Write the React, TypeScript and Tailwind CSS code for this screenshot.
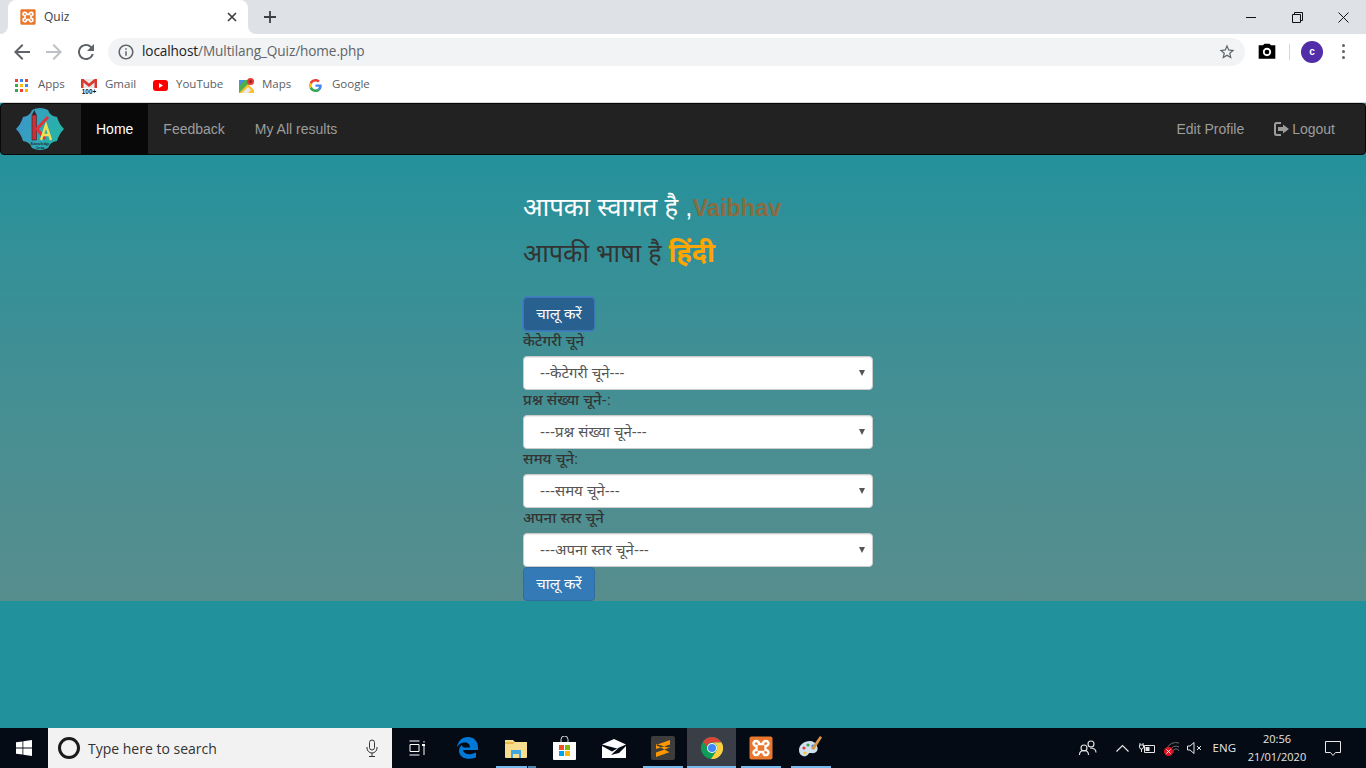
import type { ReactNode } from "react";

const devanagari = "font-['Liberation_Sans','Noto_Sans','Noto_Sans_CJK_SC',sans-serif]";

function Xampp({ size }: { size: number }) {
  return (
    <svg width={size} height={size} viewBox="0 0 24 24">
      <rect x="0.5" y="0.5" width="23" height="23" rx="2" fill="#e9772e" />
      <path
        d="M7 5C9 5 10 6.500 10 8H14C14 6.500 15 5 17 5C18.600 5 19.500 6.400 19.500 7.500C19.500 9 18 10 16.500 10V14C18 14 19.500 15 19.500 16.500C19.500 17.600 18.600 19 17 19C15 19 14 17.500 14 16H10C10 17.500 9 19 7 19C5.400 19 4.500 17.600 4.500 16.500C4.500 15 6 14 7.500 14V10C6 10 4.500 9 4.500 7.500C4.500 6.400 5.400 5 7 5Z"
        fill="none"
        stroke="#fff"
        strokeWidth="2.400"
      />
    </svg>
  );
}

function KnowledgeLogo() {
  return (
    <svg width="50" height="44" viewBox="0 0 50 44">
      <defs>
        <linearGradient id="badge" x1="0" y1="0" x2="1" y2="0.3">
          <stop offset="0" stopColor="#3f93cf" />
          <stop offset="1" stopColor="#27b3a8" />
        </linearGradient>
      </defs>
      <path
        d="M17 3Q25 -1 33 3Q35 9 42 10Q44 17 49 22Q44 27 42 34Q35 35 33 41Q25 45 17 41Q15 35 8 34Q6 27 1 22Q6 17 8 10Q15 9 17 3Z"
        fill="url(#badge)"
      />
      <rect x="17" y="8" width="4.500" height="25" fill="#c9303a" stroke="#3a2020" strokeWidth="0.600" />
      <path d="M17 8l2.250-5 2.250 5z" fill="#3a2020" />
      <path d="M21 23L33 10M22 22l8 10" stroke="#e2323a" strokeWidth="3" fill="none" />
      <path d="M26 33l5-15 5 15M27.500 28h7" stroke="#f4e04d" strokeWidth="2.400" fill="none" />
      <text x="25" y="37.500" textAnchor="middle" fontSize="4" fontWeight="700" fill="#1c2a3a" fontFamily="Liberation Serif, serif">
        Knowledge
      </text>
      <text x="25" y="41.500" textAnchor="middle" fontSize="3.400" fontWeight="700" fill="#1c2a3a" fontFamily="Liberation Serif, serif">
        Arena
      </text>
    </svg>
  );
}

function Bookmark({ icon, label, className }: { icon: ReactNode; label: string; className: string }) {
  return (
    <div className={`flex items-center ${className}`}>
      {icon}
      <span className="relative top-[-2px] text-[11.500px] text-[#5a5e63] font-['Open_Sans',sans-serif]">{label}</span>
    </div>
  );
}

function TaskIcon({ children, active, bar }: { children: ReactNode; active?: boolean; bar?: string }) {
  return (
    <div className={`relative flex h-full w-[49px] items-center justify-center ${active ? "bg-[#3a3e47]" : ""}`}>
      {children}
      {bar && <div className={`absolute bottom-0 h-[2px] bg-[#76b9ed] ${bar}`} />}
    </div>
  );
}

function Field({ label, value }: { label: string; value: string }) {
  return (
    <>
      <label className={`mb-[5px] block h-[20px] text-[15px] leading-[19px] font-medium text-[#333] ${devanagari}`}>{label}</label>
      <div className="relative w-[350px]">
        <select className={`block h-[34px] w-full appearance-none rounded-[4px] border border-[#ccc] bg-white pl-[16px] pr-3 text-[15px] text-[#555] shadow-[inset_0_1px_1px_rgba(0,0,0,0.075)] ${devanagari}`}>
          <option>{value}</option>
        </select>
        <svg className="absolute right-[8px] top-[14px]" width="6" height="6" viewBox="0 0 6 6" fill="#555">
          <path d="M0 0h6L3 6z" />
        </svg>
      </div>
    </>
  );
}

export default function App() {
  return (
    <div className="flex h-[768px] w-[1366px] flex-col overflow-hidden bg-[#21919b]">
      {/* tab strip */}
      <div className="flex h-[34px] shrink-0 items-center bg-[#dee1e6]">
        <div className="relative ml-2 flex h-full w-[240px] items-center rounded-t-[8px] bg-white pl-3 pr-[11px]">
          <svg className="absolute bottom-0 left-[-8px]" width="8" height="8" viewBox="0 0 8 8">
            <path d="M8 0v8H0a8 8 0 0 0 8-8z" fill="#fff" />
          </svg>
          <svg className="absolute bottom-0 right-[-8px]" width="8" height="8" viewBox="0 0 8 8">
            <path d="M0 0v8h8a8 8 0 0 1-8-8z" fill="#fff" />
          </svg>
          <Xampp size={16} />
          <span className="ml-2 flex-1 text-[12px] text-[#3c4043] font-['Open_Sans',sans-serif]">Quiz</span>
          <svg width="10" height="10" viewBox="0 0 10 10">
            <path d="M1 1l8 8M9 1l-8 8" stroke="#3c4043" strokeWidth="1.700" />
          </svg>
        </div>
        <svg className="ml-[15px]" width="14" height="14" viewBox="0 0 14 14">
          <path d="M7 1v12M1 7h12" stroke="#3c4043" strokeWidth="1.800" />
        </svg>
        <div className="ml-auto flex h-full items-center">
          <div className="flex w-[46px] justify-center">
            <div className="h-px w-[10px] bg-[#111]" />
          </div>
          <div className="flex w-[46px] justify-center">
            <svg width="11" height="11" viewBox="0 0 11 11" fill="none" stroke="#111">
              <path d="M.5 2.500h8v8h-8zM2.500 2.500v-2h8v8h-2" />
            </svg>
          </div>
          <div className="flex w-[46px] justify-center">
            <svg width="11" height="11" viewBox="0 0 11 11" stroke="#111">
              <path d="M.5.5l10 10M10.500.5l-10 10" />
            </svg>
          </div>
        </div>
      </div>

      {/* toolbar */}
      <div className="flex h-[35px] shrink-0 items-center bg-white">
        <svg className="ml-[10px]" width="24" height="24" viewBox="0 0 24 24" fill="#5f6368">
          <path d="M20 11H7.830l5.590-5.590L12 4l-8 8 8 8 1.410-1.410L7.830 13H20v-2z" />
        </svg>
        <svg className="ml-[8px]" width="24" height="24" viewBox="0 0 24 24" fill="#bdc1c6">
          <path d="M12 4l-1.410 1.410L16.170 11H4v2h12.170l-5.580 5.590L12 20l8-8z" />
        </svg>
        <svg className="ml-[8px]" width="24" height="24" viewBox="0 0 24 24" fill="#5f6368">
          <path d="M17.650 6.350A7.958 7.958 0 0 0 12 4c-4.420 0-7.990 3.580-7.990 8s3.570 8 7.990 8c3.730 0 6.840-2.550 7.730-6h-2.080A5.990 5.990 0 0 1 12 18c-3.310 0-6-2.690-6-6s2.690-6 6-6c1.660 0 3.140.690 4.220 1.780L13 11h7V4l-2.350 2.350z" />
        </svg>
        <div className="ml-[10px] flex h-[28px] w-[1137px] items-center rounded-full bg-[#f1f3f4] pl-[9px] pr-[9px]">
          <svg width="18" height="18" viewBox="0 0 24 24" fill="#5f6368">
            <path d="M11 7h2v2h-2zm0 4h2v6h-2zm1-9C6.480 2 2 6.480 2 12s4.480 10 10 10 10-4.480 10-10S17.520 2 12 2zm0 18c-4.410 0-8-3.590-8-8s3.590-8 8-8 8 3.590 8 8-3.590 8-8 8z" />
          </svg>
          <span className="ml-[7px] flex-1 text-[13.600px] text-[#5f6368] font-['Open_Sans',sans-serif] tracking-[-0.1px]">
            <span className="text-[#202124]">localhost</span>/Multilang_Quiz/home.php
          </span>
          <svg width="18" height="18" viewBox="0 0 24 24" fill="#5f6368">
            <path d="M22 9.240l-7.190-.620L12 2 9.190 8.630 2 9.240l5.460 4.730L5.820 21 12 17.270 18.180 21l-1.630-7.030L22 9.240zM12 15.400l-3.760 2.270 1-4.280-3.320-2.880 4.380-.380L12 6.100l1.710 4.040 4.380.380-3.320 2.880 1 4.280L12 15.400z" />
          </svg>
        </div>
        <svg className="ml-[12px]" width="20" height="20" viewBox="0 0 24 24" fill="#000">
          <path d="M9 2L7.170 4H2v16h20V4h-5.170L15 2H9zm3 15c-2.760 0-5-2.240-5-5s2.240-5 5-5 5 2.240 5 5-2.240 5-5 5zm0-2.200a2.800 2.800 0 1 0 0-5.600 2.800 2.800 0 0 0 0 5.600z" />
        </svg>
        <div className="ml-[12px] h-[16px] w-px bg-[#d5d7da]" />
        <div className="ml-[11px] flex h-[22px] w-[22px] items-center justify-center rounded-full bg-[#512da8] text-[10px] font-bold text-white font-['Liberation_Sans',sans-serif]">
          c
        </div>
        <div className="ml-[19px] flex flex-col gap-[3px]">
          <div className="h-[3px] w-[3px] rounded-full bg-[#5f6368]" />
          <div className="h-[3px] w-[3px] rounded-full bg-[#5f6368]" />
          <div className="h-[3px] w-[3px] rounded-full bg-[#5f6368]" />
        </div>
      </div>

      {/* bookmarks */}
      <div className="flex h-[33px] shrink-0 items-center bg-white pl-[15px]">
        <Bookmark
          className="w-[66px] gap-[10px]"
          label="Apps"
          icon={
            <div className="grid w-[13px] grid-cols-3 gap-[2px]">
              {["#ea4335", "#4285f4", "#ea4335", "#34a853", "#fbbc05", "#4285f4", "#34a853", "#ea4335", "#fbbc05"].map((c, i) => (
                <div key={i} className="h-[3px] w-[3px]" style={{ backgroundColor: c }} />
              ))}
            </div>
          }
        />
        <Bookmark
          className="w-[72px] gap-[8px]"
          label="Gmail"
          icon={
            <svg width="16" height="16" viewBox="0 0 16 16">
              <path d="M0 1h16v9H0z" fill="#e8e8e8" />
              <path d="M0 1h2.500L8 5.500 13.500 1H16v9h-2.500V4.500L8 9 2.500 4.500V10H0z" fill="#d9392f" />
              <text x="8" y="15.500" textAnchor="middle" fontSize="6.400" fontWeight="700" fill="#111" fontFamily="Liberation Sans, sans-serif">
                100+
              </text>
            </svg>
          }
        />
        <Bookmark
          className="w-[86px] gap-[8px]"
          label="YouTube"
          icon={
            <svg width="15" height="11" viewBox="0 0 15 11">
              <rect width="15" height="11" rx="3" fill="#f00" />
              <path d="M6 3l4 2.500L6 8z" fill="#fff" />
            </svg>
          }
        />
        <Bookmark
          className="w-[70px] gap-[8px]"
          label="Maps"
          icon={
            <svg width="15" height="15" viewBox="0 0 15 15">
              <path d="M0 2h10v13H0z" fill="#4caf50" />
              <path d="M0 15L9 6l6 6v3z" fill="#fbc02d" />
              <path d="M0 2h6L0 8z" fill="#4a90e2" />
              <path d="M3 15l6-6 3 3-3 3z" fill="#e8eaed" />
              <circle cx="11.500" cy="3.500" r="3.500" fill="#e53935" />
              <circle cx="11.500" cy="3.500" r="1.200" fill="#8e1a17" />
            </svg>
          }
        />
        <Bookmark
          className="gap-[10px]"
          label="Google"
          icon={
            <svg width="13" height="13" viewBox="0 0 48 48">
              <path fill="#EA4335" d="M24 9.500c3.540 0 6.710 1.220 9.210 3.600l6.850-6.850C35.900 2.380 30.470 0 24 0 14.620 0 6.510 5.380 2.560 13.220l7.980 6.190C12.430 13.720 17.740 9.500 24 9.500z" />
              <path fill="#4285F4" d="M46.980 24.550c0-1.570-.150-3.090-.380-4.550H24v9.020h12.940c-.580 2.960-2.260 5.480-4.780 7.180l7.730 6c4.510-4.180 7.090-10.360 7.090-17.650z" />
              <path fill="#FBBC05" d="M10.530 28.590c-.480-1.450-.760-2.990-.760-4.590s.270-3.140.760-4.590l-7.980-6.190C.920 16.460 0 20.120 0 24c0 3.880.920 7.540 2.560 10.780l7.970-6.190z" />
              <path fill="#34A853" d="M24 48c6.480 0 11.930-2.130 15.890-5.810l-7.730-6c-2.150 1.450-4.920 2.300-8.160 2.300-6.260 0-11.570-4.220-13.470-9.910l-7.980 6.190C6.510 42.620 14.620 48 24 48z" />
            </svg>
          }
        />
      </div>
      <div className="h-px shrink-0 bg-[#d3d5d8]" />

      {/* navbar */}
      <nav className="flex h-[52px] shrink-0 items-stretch rounded-[4px] border border-[#080808] bg-[#222] text-[14px] text-[#9d9d9d] font-['Liberation_Sans',sans-serif]">
        <div className="flex w-[80px] items-center pl-[14px]">
          <KnowledgeLogo />
        </div>
        <a className="flex items-center bg-[#080808] px-[15px] text-white">Home</a>
        <a className="flex items-center px-[15px]">Feedback</a>
        <a className="flex items-center px-[15px]">My All results</a>
        <a className="ml-auto flex items-center px-[15px]">Edit Profile</a>
        <a className="mr-[15px] flex items-center gap-[3px] px-[15px]">
          <svg width="15" height="14" viewBox="0 0 15 14" fill="#9d9d9d">
            <path d="M2.500 0H7v2H3a1 1 0 0 0-1 1v8a1 1 0 0 0 1 1h4v2H2.500A2.500 2.500 0 0 1 0 11.500v-9A2.500 2.500 0 0 1 2.500 0z" />
            <path d="M9 2.500L15 7l-6 4.500V9H4V5h5z" />
          </svg>
          Logout
        </a>
      </nav>

      {/* page body */}
      <main className="flex-1">
        <div className="h-[446px] bg-gradient-to-b from-[#23919b] to-[#578d8d] pl-[523px] pt-[39px]">
          <h3 className={`mb-[20px] h-[26px] text-[25.700px] leading-[26px] text-white ${devanagari}`}>
            आपका स्वागत है ,<b className="text-[23.500px] text-[#8b6b3e]">Vaibhav</b>
          </h3>
          <h3 className={`mb-[31px] h-[26px] text-[25.200px] leading-[26px] text-[#333] ${devanagari}`}>
            आपकी भाषा है <b className="text-[27px] text-[#ffa500]">हिंदी</b>
          </h3>
          <button className={`block h-[34px] w-[72px] rounded-[4px] border border-[#3b78b8] bg-[#286090] text-[15px] text-white outline outline-1 outline-[#3f7fc0] ${devanagari}`}>
            चालू करें
          </button>
          <Field label="केटेगरी चूने" value="--केटेगरी चूने---" />
          <Field label="प्रश्न संख्या चूने-:" value="---प्रश्न संख्या चूने---" />
          <Field label="समय चूने:" value="---समय चूने---" />
          <Field label="अपना स्तर चूने" value="---अपना स्तर चूने---" />
          <button className={`block h-[34px] w-[72px] rounded-[4px] border border-[#2e6da4] bg-[#337ab7] text-[15px] text-white ${devanagari}`}>
            चालू करें
          </button>
        </div>
      </main>

      {/* taskbar */}
      <div className="flex h-[40px] shrink-0 items-center bg-[#050b14] text-white">
        <div className="flex h-full w-[48px] items-center justify-center">
          <svg width="16" height="16" viewBox="0 0 16 16" fill="#fff">
            <path d="M0 2.300l6.500-.9v6.200H0zM7.300 1.300L16 0v7.600H7.300zM0 8.400h6.500v6.200L0 13.700zM7.300 8.400H16V16l-8.700-1.300z" />
          </svg>
        </div>
        <div className="flex h-full w-[344px] items-center bg-[#f2f2f2] pl-[10px] pr-[13px]">
          <div className="h-[22px] w-[22px] rounded-full border-[3px] border-[#1a1a1a]" />
          <span className="ml-[8px] flex-1 text-[14px] text-[#333] font-['Open_Sans',sans-serif]">Type here to search</span>
          <svg width="14" height="18" viewBox="0 0 14 18" fill="none" stroke="#333">
            <rect x="4.500" y="1" width="5" height="10" rx="2.500" />
            <path d="M2 8v1a5 5 0 0 0 10 0V8M7 14v3M4 17.500h6" />
          </svg>
        </div>
        <TaskIcon>
          <svg width="16" height="16" viewBox="0 0 16 16" fill="none" stroke="#fff">
            <path d="M.5 1h10M.5 15h10M1 4.500h9v7H1zM15 1v1.500M15 6v9" />
            <rect x="13" y="4" width="3" height="2" fill="#fff" stroke="none" />
          </svg>
        </TaskIcon>
        <div className="w-px" />
        <TaskIcon>
          <svg width="22" height="22" viewBox="0 0 22 22">
            <path
              d="M1 10C2 4 6 0 12 0c6 0 10 4 10 11v2H7c.5 4 6 6 13 2.500v5c-8 3-17 1-17-7 0-2 1-4 3-5.500 0 1 .5 2 2 2.500h6c0-3-2-5-5-5-3 0-6 1-8 5z"
              fill="#0078d7"
            />
          </svg>
        </TaskIcon>
        <TaskIcon bar="left-[5px] w-[31px]">
          <svg width="22" height="20" viewBox="0 0 22 20">
            <path d="M0 2h8l2 2h12v15a1 1 0 0 1-1 1H1a1 1 0 0 1-1-1z" fill="#f8dd8e" />
            <path d="M0 4h9v2H0z" fill="#e9b949" />
            <path d="M6 12h10v8h-2v-4H8v4H6z" fill="#3fa7e0" />
          </svg>
          <div className="absolute bottom-0 left-[37px] h-[2px] w-[8px] bg-[#4a87b5]" />
        </TaskIcon>
        <TaskIcon>
          <svg width="23" height="24" viewBox="0 0 23 24">
            <path d="M8 6V3.500a3.500 3.500 0 0 1 7 0V6" fill="none" stroke="#ddd" strokeWidth="1" />
            <path d="M0 6h23v17a1 1 0 0 1-1 1H1a1 1 0 0 1-1-1z" fill="#fff" />
            <rect x="6" y="9" width="5" height="5" fill="#f25022" />
            <rect x="12" y="9" width="5" height="5" fill="#7fba00" />
            <rect x="6" y="15" width="5" height="5" fill="#00a4ef" />
            <rect x="12" y="15" width="5" height="5" fill="#ffb900" />
          </svg>
        </TaskIcon>
        <TaskIcon>
          <svg width="24" height="19" viewBox="0 0 24 19">
            <path d="M0 5.500L12 0l12 5.500-9 4z" fill="#fff" />
            <path d="M0 7l10 5.500L17 8.500 9 16l8-2 7-7v12H0z" fill="#fff" />
          </svg>
        </TaskIcon>
        <TaskIcon bar="left-[5px] w-[40px]">
          <div className="flex h-[24px] w-[24px] items-center justify-center rounded-[2px] bg-[#3d3d3d]">
            <svg width="14" height="17" viewBox="0 0 14 17" fill="#ff9800">
              <path d="M14 0v4.500L0 9V5zM14 7.500V12L0 17v-4.500zM0 5l14 7.500V8L0 4z" />
            </svg>
          </div>
        </TaskIcon>
        <TaskIcon active bar="left-0 w-full">
          <svg width="22" height="22" viewBox="0 0 22 22">
            <circle cx="11" cy="11" r="11" fill="#0f9d58" />
            <path d="M2.200 4.400A11 11 0 0 1 20.500 5.500H11A5.500 5.500 0 0 0 5.700 9.600z" fill="#db4437" />
            <path d="M20.500 5.500A11 11 0 0 1 10 22L15.500 13.800A5.500 5.500 0 0 0 11 5.500z" fill="#ffcd40" />
            <circle cx="11" cy="11" r="5" fill="#fff" />
            <circle cx="11" cy="11" r="4" fill="#4285f4" />
          </svg>
        </TaskIcon>
        <TaskIcon bar="left-[5px] w-[40px]">
          <Xampp size={24} />
        </TaskIcon>
        <div className="w-px" />
        <TaskIcon bar="left-[5px] w-[40px]">
          <svg width="24" height="24" viewBox="0 0 24 24">
            <path d="M11 5C5 5 0 9 0 14c0 5 4 7 7 6 3-1 2-3 4-3s5 1 7-2c2-3-1-10-7-10z" fill="#cfe0ef" />
            <circle cx="5" cy="12" r="1.600" fill="#e53935" />
            <circle cx="9" cy="9" r="1.600" fill="#43a047" />
            <circle cx="14" cy="10" r="1.600" fill="#1e88e5" />
            <circle cx="6" cy="17" r="1.600" fill="#fbc02d" />
            <path d="M21 0l2 1.500L15 14l-3-1.500z" fill="#d9964a" />
          </svg>
        </TaskIcon>

        {/* tray */}
        <div className="ml-auto flex h-full items-center text-[#e6e6e6]">
          <svg width="18" height="16" viewBox="0 0 18 16" fill="none" stroke="#e6e6e6" strokeWidth="1.100">
            <circle cx="5" cy="8" r="3" />
            <circle cx="12" cy="4" r="3" />
            <path d="M.5 15c0-3 2-4.500 4.500-4.500S9.500 12 9.500 15M11 8c3 0 6 1 6 4.500" />
          </svg>
          <svg className="ml-[19px]" width="13" height="8" viewBox="0 0 13 8" fill="none" stroke="#e6e6e6" strokeWidth="1.200">
            <path d="M.5 7.500l6-6 6 6" />
          </svg>
          <svg className="ml-[10px]" width="16" height="12" viewBox="0 0 16 12" fill="none" stroke="#e6e6e6">
            <path d="M5.500 3.500h10v7h-10z" />
            <path d="M6.500 5h4v4h-4z" fill="#e6e6e6" stroke="none" />
            <path d="M1 1v2M4 1v2M.5 3h4v2a2 2 0 0 1-4 0zM2.500 7v3" />
          </svg>
          <div className="relative ml-[9px] h-[16px] w-[16px]">
            <svg width="16" height="16" viewBox="0 0 16 16" fill="none" stroke="#6b6b6b">
              <path d="M3 8a10 10 0 0 1 12-5M6 11a6 6 0 0 1 9-4M9 13a3 3 0 0 1 6-2" />
            </svg>
            <div className="absolute bottom-0 left-0 flex h-[9px] w-[9px] items-center justify-center rounded-full bg-[#e81123]">
              <svg width="5" height="5" viewBox="0 0 5 5" stroke="#fff">
                <path d="M.5.500l4 4M4.500.500l-4 4" />
              </svg>
            </div>
          </div>
          <svg className="ml-[7px]" width="16" height="12" viewBox="0 0 16 12" fill="none" stroke="#e6e6e6">
            <path d="M.5 4h2.500L7 .5v11L3 8H.5zM10 4l4 4M14 4l-4 4" />
          </svg>
          <span className="ml-[10px] text-[11.500px] font-['Open_Sans',sans-serif]">ENG</span>
          <div className="ml-[12px] flex w-[58px] flex-col items-center text-[11px] leading-[18px] font-['Open_Sans',sans-serif]">
            <span>20:56</span>
            <span>21/01/2020</span>
          </div>
          <svg className="ml-[19px] mr-[25px]" width="16" height="15" viewBox="0 0 16 15" fill="none" stroke="#e6e6e6">
            <path d="M.5.500h15v11h-5l-2.500 3-2.500-3h-5z" />
          </svg>
        </div>
      </div>
    </div>
  );
}
